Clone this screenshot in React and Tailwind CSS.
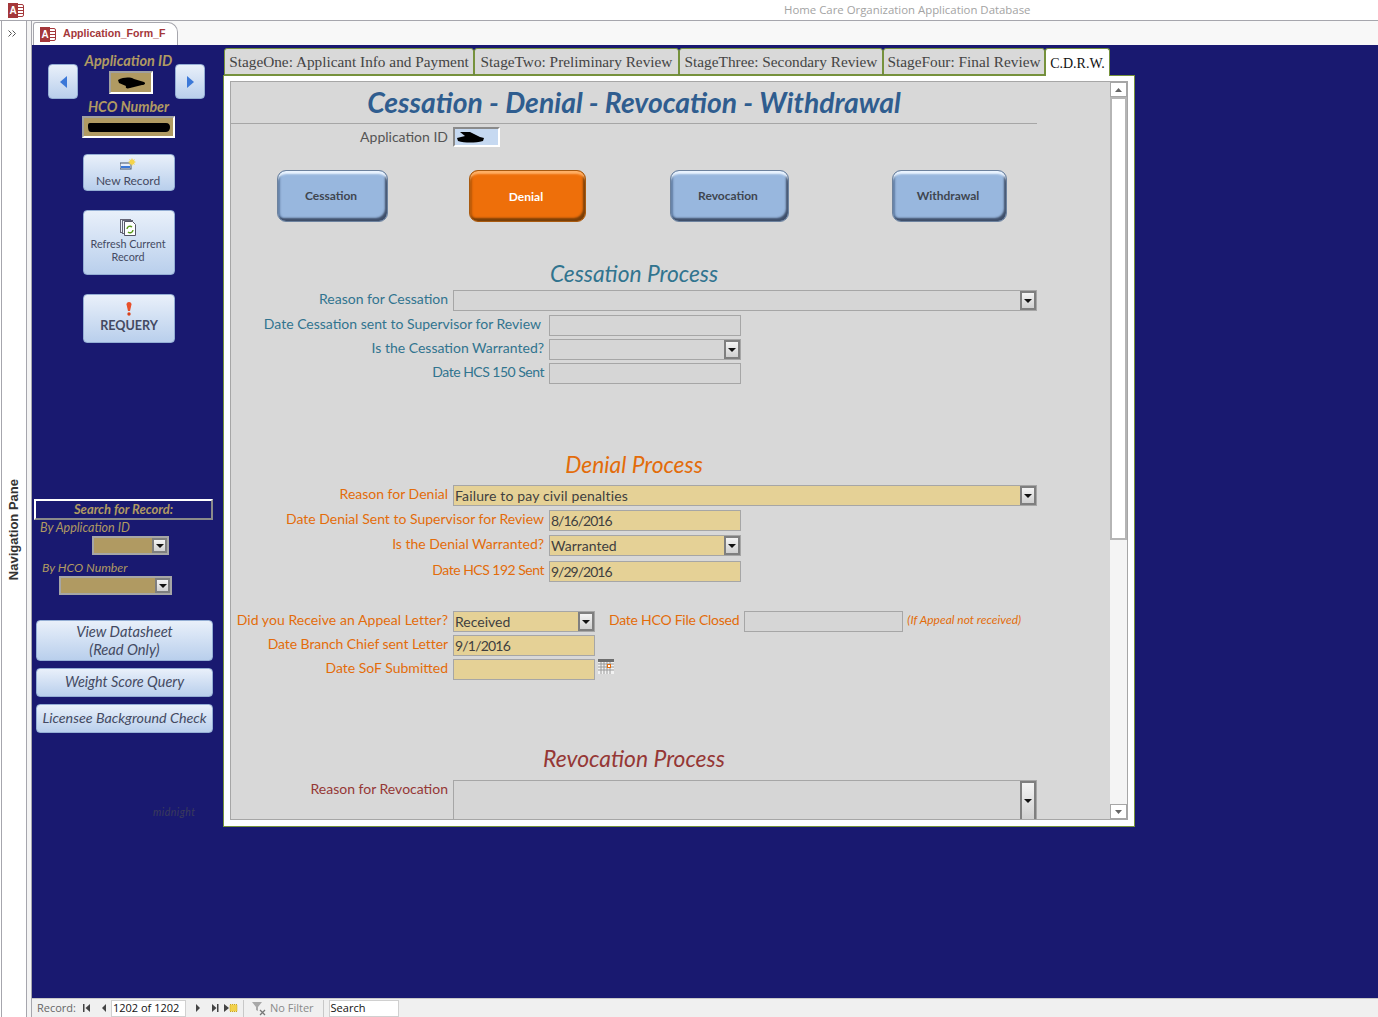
import React from "react";

const labelText = "font-['Lato'] text-[14px] leading-none whitespace-nowrap pb-[3px]";

// little helpers for the Access form controls
const Arrow = ({ className = "" }) => (
  <svg width="8" height="4" viewBox="0 0 8 4" className={className}>
    <path d="M0 0h8L4 4z" fill="#111" />
  </svg>
);

const DropButton = ({ className = "w-[16px]" }) => (
  <div className={`${className} h-full shrink-0 border-2 border-[#7f7f7f] bg-gradient-to-b from-[#f4f4f4] to-[#d0d0d0] flex items-center justify-center`}>
    <Arrow />
  </div>
);

const Blob = ({ w, h, d }) => (
  <svg width={w} height={h} viewBox={`0 0 ${w} ${h}`}>
    <path d={d} fill="#000" />
  </svg>
);

const Field = ({ width, value, tan, combo, valueClass = "", className = "h-[21px]" }) => (
  <div
    className={`${width} ${className} shrink-0 border border-[#a6a6a6] flex items-center justify-between font-['Lato'] text-[14px] text-[#3f3f3f] ${
      tan ? "bg-[#e5d196]" : "bg-[#d6d6d6]"
    }`}
  >
    <span className={`pl-[1px] leading-none whitespace-nowrap ${valueClass}`}>{value}</span>
    {combo && <DropButton />}
  </div>
);

const WideRow = ({ label, color, className = "mt-[3px]", children }) => (
  <div className={`flex items-center h-[21px] ${className}`}>
    <div className={`w-[217px] shrink-0 text-right ${labelText} ${color}`}>{label}</div>
    <div className="ml-[5px] flex items-center">{children}</div>
  </div>
);

const NarrowRow = ({ label, color, className = "mt-[3px]", children }) => (
  <div className={`flex items-center h-[21px] ${className}`}>
    <div className={`w-[313px] shrink-0 text-right ${labelText} ${color}`}>{label}</div>
    <div className="ml-[5px] flex items-center">{children}</div>
  </div>
);

const ProcessButton = ({ label, className, active }) => (
  <div
    className={`${className} h-[52px] rounded-[9px] flex items-center justify-center pr-[3px] font-['Lato'] font-bold text-[12px] ${
      active
        ? "bg-[#ee6f0a] text-white pt-[1px] border border-[#a85a10] shadow-[inset_0_4px_2px_-1px_#ffb066,inset_-3px_-4px_2px_-1px_#7a3f08,inset_3px_0_2px_-1px_#b85808]"
        : "bg-[#98b7de] text-[#3f4650] border border-[#6d829e] shadow-[inset_0_4px_2px_-1px_#eaf4ff,inset_-3px_-4px_2px_-1px_#3f4f6a,inset_3px_0_2px_-1px_#5f7ca3]"
    }`}
  >
    {label}
  </div>
);

const SideButton = ({ className, children }) => (
  <div className={`${className} rounded-[4px] border border-[#94aed4] bg-gradient-to-b from-[#e9f0fa] to-[#b9cfec] text-[#444a62] flex flex-col items-center justify-center font-['Lato']`}>
    {children}
  </div>
);

const NavArrowButton = ({ dir }) => (
  <div className="w-[30px] h-[35px] rounded-[4px] border border-[#94aed4] bg-gradient-to-b from-[#e9f0fa] to-[#b9cfec] flex items-center justify-center">
    <svg width="7" height="12" viewBox="0 0 7 12">
      <path d={dir === "left" ? "M7 0v12L0 6z" : "M0 0v12l7-6z"} fill="#3b78d8" />
    </svg>
  </div>
);

const AccessLogo = () => (
  <div className="w-[16px] h-[15px] relative">
    <svg width="16" height="13" viewBox="0 0 16 13" className="absolute right-0 top-[1px]">
      <rect x="8" y="0.5" width="7.5" height="12" rx="1.5" fill="#fff" stroke="#a4373a" />
      <path d="M9 3.5h6M9 6.5h6M9 9.5h6" stroke="#a4373a" />
    </svg>
    <div className="absolute left-0 top-0 w-[10px] h-[15px] bg-[#a4373a] text-white text-[10px] font-bold font-['Liberation_Sans'] leading-[15px] text-center">A</div>
  </div>
);

const Tab = ({ label, className, active }) => (
  <div
    className={`${className} shrink-0 flex items-center justify-center pt-[1px] rounded-t-[3px] border border-[#76923c] font-['Liberation_Serif'] whitespace-nowrap ${
      active ? "h-[28px] bg-white border-b-0 text-[#111] text-[14px]" : "h-[27px] bg-[#d9d9d9] text-[#444] text-[15.3px]"
    }`}
  >
    {label}
  </div>
);

const RecordIcon = ({ d, className = "" }) => (
  <svg width="8" height="8" viewBox="0 0 8 8" className={className}>
    <path d={d} fill="#444" />
  </svg>
);

export default function App() {
  return (
    <div className="w-[1378px] h-[1017px] overflow-hidden flex flex-col bg-white">
      {/* title bar */}
      <div className="h-[21px] shrink-0 flex items-center border-b border-[#a6a6ad] bg-white">
        <div className="ml-[8px]"><AccessLogo /></div>
        <div className="ml-[760px] font-['Open_Sans'] text-[11.4px] text-[#a3a3a3] whitespace-nowrap">Home Care Organization Application Database</div>
      </div>

      <div className="flex-1 flex min-h-0">
        {/* navigation pane */}
        <div className="ml-[1px] w-[26px] shrink-0 border-x border-[#a6a6ad] flex flex-col items-center">
          <svg width="9" height="7" viewBox="0 0 9 7" className="mt-[9px] -ml-[3px]">
            <path d="M0.5 0.5l3 3-3 3M4.5 0.5l3 3-3 3" fill="none" stroke="#555" />
          </svg>
          <div className="mt-[442px] font-['Liberation_Sans'] font-bold text-[13px] text-[#333] [writing-mode:vertical-rl] rotate-180 whitespace-nowrap">Navigation Pane</div>
        </div>
        <div className="w-[5px] shrink-0 bg-[#f4f4f4] border-r border-[#a6a6ad]" />

        <div className="flex-1 flex flex-col min-w-0">
          {/* document tab strip */}
          <div className="h-[24px] shrink-0 bg-[#f8f8f8] flex items-end">
            <div className="ml-[1px] w-[145px] h-[23px] bg-white border border-b-0 border-[#a6a6ad] rounded-tl-[3px] rounded-tr-[10px] flex items-center pl-[6px]">
              <AccessLogo />
              <span className="ml-[7px] font-['Liberation_Sans'] text-[10.6px] font-bold text-[#a4373a] whitespace-nowrap">Application_Form_F</span>
            </div>
          </div>

          {/* navy form area */}
          <div className="flex-1 bg-[#191970] flex min-h-0">
            {/* left column */}
            <div className="w-[191px] shrink-0 flex flex-col">
              <div className="mt-[19px] ml-[16px] flex">
                <NavArrowButton dir="left" />
                <div className="w-[97px] flex flex-col items-center -mt-[12px]">
                  <div className="ml-[4px] font-['Lato'] font-bold italic text-[14.5px] leading-[17px] text-[#b09a62] whitespace-nowrap">Application ID</div>
                  <div className="mt-[2px] ml-[8px] w-[44px] h-[23px] border-2 border-[#a0a0a0] border-b-white border-r-white bg-[#b09a62] flex items-center justify-center">
                    <Blob w="30" h="13" d="M2 4c6-3 12-3 16-1l10 3c2 1 1 3-2 3L14 12c-3 1-5 0-4-2L3 7z" />
                  </div>
                </div>
                <NavArrowButton dir="right" />
              </div>
              <div className="-mt-[1px] ml-[50px] w-[93px] text-center font-['Lato'] font-bold italic text-[14.2px] leading-[17px] text-[#b09a62] whitespace-nowrap">HCO Number</div>
              <div className="mt-[1px] ml-[50px] w-[93px] h-[22px] border-2 border-[#a0a0a0] border-b-white border-r-white bg-[#b09a62] flex items-center justify-center">
                <Blob w="82" h="9" d="M2 0h76c3 0 4 2 4 4s-1 5-4 5H3C1 9 0 7 0 4s0-4 2-4z" />
              </div>

              <SideButton className="mt-[16px] ml-[51px] w-[92px] h-[37px] pr-[2px]">
                <svg width="16" height="12" viewBox="0 0 16 12">
                  <rect x="0" y="5" width="11" height="6" fill="#e8eefa" stroke="#44546a" />
                  <rect x="1" y="8" width="9" height="2" fill="#3b78d8" />
                  <path d="M12 0l1 2 2-1-1 2 2 1-2 1 1 2-2-1-1 2-1-2-2 1 1-2-2-1 2-1-1-2 2 1z" fill="#f5d44a" />
                </svg>
                <div className="text-[12px] leading-[15px] mt-[3px]">New Record</div>
              </SideButton>

              <SideButton className="mt-[19px] ml-[51px] w-[92px] h-[65px] pb-[4px] pr-[2px]">
                <svg width="16" height="17" viewBox="0 0 16 17">
                  <rect x="0.5" y="0.5" width="10" height="13" fill="#eef2fa" stroke="#667" />
                  <rect x="2.5" y="1.5" width="10" height="13" fill="#eef2fa" stroke="#667" />
                  <path d="M4.5 2.5h8l3 3v11h-11z" fill="#fff" stroke="#556" />
                  <path d="M7 10a3 3 0 0 1 5-2M13 11a3 3 0 0 1-5 2" fill="none" stroke="#5a9a1a" strokeWidth="1.4" />
                </svg>
                <div className="text-[10.8px] leading-[13px] mt-[1px] text-center">Refresh Current<br />Record</div>
              </SideButton>

              <SideButton className="mt-[19px] ml-[51px] w-[92px] h-[49px] pb-[2px]">
                <svg width="6" height="14" viewBox="0 0 6 14">
                  <path d="M0.5 2.5a2.5 2.5 0 0 1 5 0L4 9H2z" fill="#e8502a" />
                  <circle cx="3" cy="12" r="1.7" fill="#d8401a" />
                </svg>
                <div className="font-bold text-[12.6px] leading-[16px] mt-[2px]">REQUERY</div>
              </SideButton>

              {/* search block */}
              <div className="mt-[156px] ml-[2px] w-[179px] h-[21px] border-2 border-white border-r-[#8a8a8a] border-b-[#8a8a8a] flex items-center justify-center font-['Lato'] font-bold italic text-[13px] text-[#b09a62]">Search for Record:</div>
              <div className="mt-[1px] ml-[8px] h-[15px] font-['Lato'] italic text-[12.5px] leading-[13px] text-[#b09a62]">By Application ID</div>
              <div className="ml-[60px] w-[77px] h-[19px] bg-[#b09a62] border-2 border-[#a6a6a6] flex justify-end">
                <DropButton className="w-[15px]" />
              </div>
              <div className="mt-[5px] ml-[10px] h-[16px] font-['Lato'] italic text-[12.3px] leading-[16px] text-[#b09a62]">By HCO Number</div>
              <div className="ml-[27px] w-[113px] h-[19px] bg-[#b09a62] border-2 border-[#a6a6a6] flex justify-end">
                <DropButton className="w-[15px]" />
              </div>

              <SideButton className="mt-[25px] ml-[4px] w-[177px] h-[41px] pb-[2px] italic text-[14.7px] leading-[18px] text-center">
                <div>View Datasheet</div>
                <div>(Read Only)</div>
              </SideButton>
              <SideButton className="mt-[7px] ml-[4px] w-[177px] h-[29px] pb-[2px] italic text-[14.4px]">Weight Score Query</SideButton>
              <SideButton className="mt-[7px] ml-[4px] w-[177px] h-[29px] pb-[2px] italic text-[14.3px] whitespace-nowrap">Licensee Background Check</SideButton>

              <div className="mt-[74px] ml-[121px] font-['Lato'] italic text-[10.5px] tracking-[0.5px] leading-none text-[#3b3b5c]">midnight</div>
            </div>

            {/* tabbed form */}
            <div className="w-[912px] shrink-0 flex flex-col h-[779px] mt-[3px]">
              <div className="flex items-start ml-[1px] z-10">
                <Tab label="StageOne: Applicant Info and Payment" className="w-[250px]" />
                <Tab label="StageTwo: Preliminary Review" className="w-[205px]" />
                <Tab label="StageThree: Secondary Review" className="w-[204px]" />
                <Tab label="StageFour: Final Review" className="w-[162px]" />
                <Tab label="C.D.R.W." className="w-[65px]" active />
              </div>
              <div className="flex-1 -mt-[1px] bg-white border border-[#76923c] pt-[5px] pl-[6px] pr-[6px] pb-[6px] min-h-0">
                <div className="h-full border border-[#a6a6a6] bg-[#d8d8d8] flex overflow-hidden">
                  <div className="w-[879px] shrink-0">
                    {/* header */}
                    <div className="h-[42px] w-[806px] border-b border-[#a6a6a6] text-center font-['Lato'] font-bold italic text-[28.3px] leading-[40px] text-[#2f5d8f] whitespace-nowrap">Cessation - Denial - Revocation - Withdrawal</div>
                    <div className="flex items-center h-[20px] mt-[3px]">
                      <div className="w-[217px] text-right font-['Lato'] text-[14px] leading-none text-[#555]">Application ID</div>
                      <div className="ml-[5px] w-[47px] h-[20px] border-2 border-[#8a8a8a] border-b-white border-r-white bg-[#c6d9f1] flex items-center pl-[1px]">
                        <Blob w="28" h="12" d="M4 1h10l10 5 4 1-1 3c-8 2-18 2-25 0L1 7l8-2z" />
                      </div>
                    </div>

                    {/* process switch buttons */}
                    <div className="flex mt-[23px]">
                      <ProcessButton label="Cessation" className="ml-[46px] w-[111px]" />
                      <ProcessButton label="Denial" className="ml-[81px] w-[117px]" active />
                      <ProcessButton label="Revocation" className="ml-[84px] w-[119px]" />
                      <ProcessButton label="Withdrawal" className="ml-[103px] w-[115px]" />
                    </div>

                    {/* cessation */}
                    <div className="mt-[38px] h-[26px] w-[806px] text-center font-['Lato'] italic text-[22.8px] leading-[26px] text-[#31748f]">Cessation Process</div>
                    <WideRow label="Reason for Cessation" color="text-[#31748f]" className="mt-[4px]">
                      <Field width="w-[584px]" combo />
                    </WideRow>
                    <NarrowRow label="Date Cessation sent to Supervisor for Review" color="text-[#31748f] pr-[3px]" className="mt-[4px]">
                      <Field width="w-[192px]" />
                    </NarrowRow>
                    <NarrowRow label="Is the Cessation Warranted?" color="text-[#31748f]">
                      <Field width="w-[192px]" combo />
                    </NarrowRow>
                    <NarrowRow label="Date HCS 150 Sent" color="text-[#31748f] tracking-[-0.5px]">
                      <Field width="w-[192px]" />
                    </NarrowRow>

                    {/* denial */}
                    <div className="mt-[67px] h-[26px] w-[806px] text-center font-['Lato'] italic text-[22.8px] leading-[26px] text-[#e36c0a]">Denial Process</div>
                    <WideRow label="Reason for Denial" color="text-[#e36c0a]" className="mt-[8px]">
                      <Field width="w-[584px]" value="Failure to pay civil penalties" valueClass="tracking-[0.15px]" combo tan />
                    </WideRow>
                    <NarrowRow label="Date Denial Sent to Supervisor for Review" color="text-[#e36c0a]" className="mt-[4px]">
                      <Field width="w-[192px]" value="8/16/2016" valueClass="tracking-[-1px]" tan />
                    </NarrowRow>
                    <NarrowRow label="Is the Denial Warranted?" color="text-[#e36c0a]" className="mt-[4px]">
                      <Field width="w-[192px]" value="Warranted" combo tan />
                    </NarrowRow>
                    <NarrowRow label="Date HCS 192 Sent" color="text-[#e36c0a] tracking-[-0.5px]" className="mt-[5px]">
                      <Field width="w-[192px]" value="9/29/2016" valueClass="tracking-[-1px]" tan />
                    </NarrowRow>

                    <WideRow label="Did you Receive an Appeal Letter?" color="text-[#e36c0a] tracking-[0.06px]" className="mt-[29px]">
                      <Field width="w-[142px]" value="Received" combo tan />
                      <div className={`ml-[14px] ${labelText} tracking-[-0.25px] text-[#e36c0a]`}>Date HCO File Closed</div>
                      <div className="ml-[5px]"><Field width="w-[159px]" /></div>
                      <div className="ml-[4px] -mt-[3px] font-['Lato'] italic text-[12px] whitespace-nowrap text-[#e36c0a]">(If Appeal not received)</div>
                    </WideRow>
                    <WideRow label="Date Branch Chief sent Letter" color="text-[#e36c0a] tracking-[-0.07px]">
                      <Field width="w-[142px]" value="9/1/2016" valueClass="tracking-[-0.8px]" tan />
                    </WideRow>
                    <WideRow label="Date SoF Submitted" color="text-[#e36c0a]">
                      <Field width="w-[142px]" tan />
                      <svg width="16" height="16" viewBox="0 0 16 16" className="ml-[3px] -mt-[5px]">
                        <rect width="16" height="15" fill="#f2f2f2" />
                        <rect width="16" height="3" fill="#6d6d6d" />
                        <path d="M0 5h16M0 8h16M0 11h16M3 3v12M6 3v12M9 3v12M12 3v12" stroke="#9a9a9a" />
                        <rect x="9.5" y="5.5" width="3" height="3" fill="#fff" stroke="#e36c0a" />
                      </svg>
                    </WideRow>

                    {/* revocation */}
                    <div className="mt-[65px] h-[26px] w-[806px] text-center font-['Lato'] italic text-[22.9px] leading-[26px] text-[#953735]">Revocation Process</div>
                    <div className="flex mt-[9px]">
                      <div className={`w-[217px] mt-[2px] text-right ${labelText} text-[#953735]`}>Reason for Revocation</div>
                      <div className="ml-[5px] w-[584px] h-[42px] border border-[#a6a6a6] bg-[#d6d6d6] flex justify-end">
                        <DropButton className="w-[16px]" />
                      </div>
                    </div>
                  </div>

                  {/* scrollbar */}
                  <div className="w-[17px] shrink-0 bg-[#f4f4f4] flex flex-col justify-between">
                    <div>
                      <div className="h-[15px] border border-[#a6a6a6] bg-white flex items-center justify-center">
                        <svg width="7" height="4" viewBox="0 0 7 4"><path d="M3.5 0L7 4H0z" fill="#666" /></svg>
                      </div>
                      <div className="h-[443px] border-2 border-[#b5b5b5] bg-white" />
                    </div>
                    <div className="h-[15px] border border-[#a6a6a6] bg-white flex items-center justify-center">
                      <svg width="7" height="4" viewBox="0 0 7 4"><path d="M0 0h7L3.5 4z" fill="#666" /></svg>
                    </div>
                  </div>
                </div>
              </div>
            </div>
          </div>

          {/* record navigation bar */}
          <div className="h-[19px] shrink-0 bg-[#f0f0f0] border-t border-[#c8c8c8] flex items-center font-['Open_Sans'] text-[11px] text-[#666]">
            <span className="ml-[5px]">Record:</span>
            <RecordIcon className="ml-[7px]" d="M0 0h1.5v8H0zM7 0v8L2.5 4z" />
            <RecordIcon className="ml-[9px]" d="M6 0v8L2 4z" />
            <div className="ml-[3px] w-[75px] h-[17px] bg-white border border-[#d0d0d0] flex items-center pl-[1px] text-[#111] whitespace-nowrap">1202 of 1202</div>
            <RecordIcon className="ml-[8px]" d="M2 0v8l4-4z" />
            <RecordIcon className="ml-[9px]" d="M1 0v8l4.5-4zM6 0H7.5v8H6z" />
            <svg width="14" height="9" viewBox="0 0 14 9" className="ml-[5px]">
              <path d="M0 0v8l5-4z" fill="#444" />
              <rect x="6" y="0.5" width="7" height="7" fill="#f2d14a" stroke="#c9a520" strokeDasharray="1 1" />
            </svg>
            <div className="ml-[5px] w-px h-[17px] bg-[#c8c8c8]" />
            <svg width="15" height="15" viewBox="0 0 15 15" className="ml-[8px]">
              <path d="M0 1h10L6 6v4L4 9V6z" fill="#a8a8a8" />
              <path d="M8 9l5 5M13 9l-5 5" stroke="#777" strokeWidth="1.3" />
            </svg>
            <span className="ml-[3px] text-[#8a8a8a]">No Filter</span>
            <div className="ml-[9px] w-px h-[17px] bg-[#c8c8c8]" />
            <div className="ml-[5px] w-[70px] h-[17px] bg-white border border-[#d0d0d0] flex items-center pl-[1px] text-[#111]">Search</div>
          </div>
        </div>
      </div>
    </div>
  );
}
